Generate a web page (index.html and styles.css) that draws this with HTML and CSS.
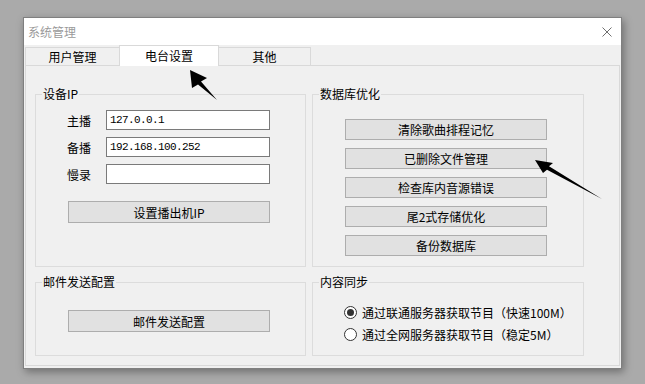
FILE: index.html
```html
<!DOCTYPE html>
<html lang="zh-CN">
<head>
    <meta charset="UTF-8">
    <title>系统管理</title>
    <link rel="stylesheet" href="styles.css">
</head>
<body>
    <div class="window">
        <div class="titlebar">
            <span class="title">系统管理</span>
            <svg class="close" width="10" height="10" viewBox="0 0 10 10">
                <path d="M0.5 0.5 L9.5 9.5 M9.5 0.5 L0.5 9.5" stroke="#6f6f6f" stroke-width="1" fill="none"/>
            </svg>
        </div>
        <div class="tabs">
            <div class="tab tab-first">用户管理</div>
            <div class="tab tab-active">电台设置</div>
            <div class="tab tab-last">其他</div>
        </div>
        <div class="tab-panel">
            <fieldset class="group">
                <legend>设备IP</legend>
                <div class="group-body ip-body">
                    <div class="field-row"><label>主播</label><input class="text-input" value="127.0.0.1"></div>
                    <div class="field-row"><label>备播</label><input class="text-input" value="192.168.100.252"></div>
                    <div class="field-row"><label>慢录</label><input class="text-input" value=""></div>
                    <button class="btn btn-left">设置播出机IP</button>
                </div>
            </fieldset>
            <fieldset class="group">
                <legend>数据库优化</legend>
                <div class="group-body db-body">
                    <button class="btn btn-db">清除歌曲排程记忆</button>
                    <button class="btn btn-db">已删除文件管理</button>
                    <button class="btn btn-db">检查库内音源错误</button>
                    <button class="btn btn-db">尾2式存储优化</button>
                    <button class="btn btn-db">备份数据库</button>
                </div>
            </fieldset>
            <fieldset class="group">
                <legend>邮件发送配置</legend>
                <div class="group-body mail-body">
                    <button class="btn btn-left">邮件发送配置</button>
                </div>
            </fieldset>
            <fieldset class="group">
                <legend>内容同步</legend>
                <div class="group-body sync-body">
                    <div class="radio-row"><span class="radio checked"></span>通过联通服务器获取节目（快速100M）</div>
                    <div class="radio-row"><span class="radio"></span>通过全网服务器获取节目（稳定5M）</div>
                </div>
            </fieldset>
        </div>
    </div>

    <!-- annotation arrows drawn over the screenshot -->
    <svg class="annotations" width="645" height="384" viewBox="0 0 645 384">
        <polygon points="190,70 207,78 201,81.5 217,100 198,84.5 192,88" fill="#000"/>
        <polygon points="535,160 553,163 549,166.3 602,199 547,169.7 543,173" fill="#000"/>
    </svg>
</body>
</html>
```

FILE: styles.css
```css
body {
    margin: 0;
    padding: 17px 0 0 23px;
    background: #aaaaaa;
    font-family: "Noto Sans CJK SC", "Liberation Sans", sans-serif;
    font-size: 12px;
    color: #000;
    height: 384px;
    box-sizing: border-box;
    overflow: hidden;
}

.window {
    width: 599px;
    height: 352px;
    box-sizing: border-box;
    border: 1px solid #7f7f7f;
    background: #f0f0f0;
    box-shadow: 2px 3px 8px rgba(0, 0, 0, 0.35);
}

.titlebar {
    height: 27px;
    background: #fff;
    display: flex;
    align-items: center;
    justify-content: space-between;
    padding: 0 9px 0 4px;
}
.title {
    color: #9a9a9a;
    font-size: 12px;
    line-height: 16px;
}
.close {
    display: block;
}

.tabs {
    display: flex;
    align-items: flex-end;
    height: 20px;
    padding-left: 1px;
    position: relative;
    z-index: 1;
}
.tab {
    box-sizing: border-box;
    height: 18px;
    line-height: 17px;
    text-align: center;
    background: #f0f0f0;
    border: 1px solid #d9d9d9;
    border-bottom: none;
    font-size: 12px;
}
.tab-first {
    width: 94px;
    border-right: none;
}
.tab-active {
    width: 100px;
    height: 21px;
    line-height: 20px;
    margin-bottom: -1px;
    background: #fff;
}
.tab-last {
    width: 92px;
    border-left: none;
}

.tab-panel {
    height: 301px;
    margin: 0 1px;
    box-sizing: border-box;
    border: 1px solid #d9d9d9;
    background: #f0f0f0;
    padding: 20px 0 0 9px;
    display: grid;
    grid-template-columns: 271px 272px;
    grid-template-rows: 181px 82px;
    column-gap: 6px;
    row-gap: 7px;
}

.group {
    margin: 0;
    padding: 0;
    min-width: 0;
    box-sizing: border-box;
    border: 1px solid #dcdcdc;
}
.group legend {
    margin-left: 6px;
    padding: 0 1px;
    font-size: 12px;
    line-height: 16px;
}

.ip-body {
    padding: 8px 0 0 31px;
}
.field-row {
    display: flex;
    align-items: center;
    height: 20px;
    margin-bottom: 7px;
}
.field-row label {
    width: 39px;
}
.text-input {
    width: 164px;
    height: 20px;
    box-sizing: border-box;
    border: 1px solid #7a7a7a;
    background: #fff;
    padding: 0 3px;
    font-family: "Liberation Mono", monospace;
    font-size: 11px;
    letter-spacing: -0.6px;
    outline: none;
}

.btn {
    display: block;
    box-sizing: border-box;
    width: 202px;
    height: 22px;
    padding: 0;
    background: #e1e1e1;
    border: 1px solid #adadad;
    font-family: "Noto Sans CJK SC", "Liberation Sans", sans-serif;
    font-size: 12px;
    color: #000;
}
.ip-body .btn-left {
    margin: 17px 0 0 1px;
}

.db-body {
    padding: 17px 0 0 32px;
}
.btn-db {
    height: 21px;
    margin-bottom: 8px;
}

.mail-body {
    padding: 20px 0 0 32px;
}

.sync-body {
    padding: 11px 0 0 31px;
}
.radio-row {
    display: flex;
    align-items: center;
    height: 22px;
}
.radio {
    width: 13px;
    height: 13px;
    box-sizing: border-box;
    border: 1px solid #333;
    border-radius: 50%;
    background: #fff;
    margin-right: 5px;
    display: flex;
    align-items: center;
    justify-content: center;
}
.radio.checked::after {
    content: "";
    width: 7px;
    height: 7px;
    border-radius: 50%;
    background: #333;
}

.annotations {
    position: absolute;
    left: 0;
    top: 0;
    pointer-events: none;
}
```
